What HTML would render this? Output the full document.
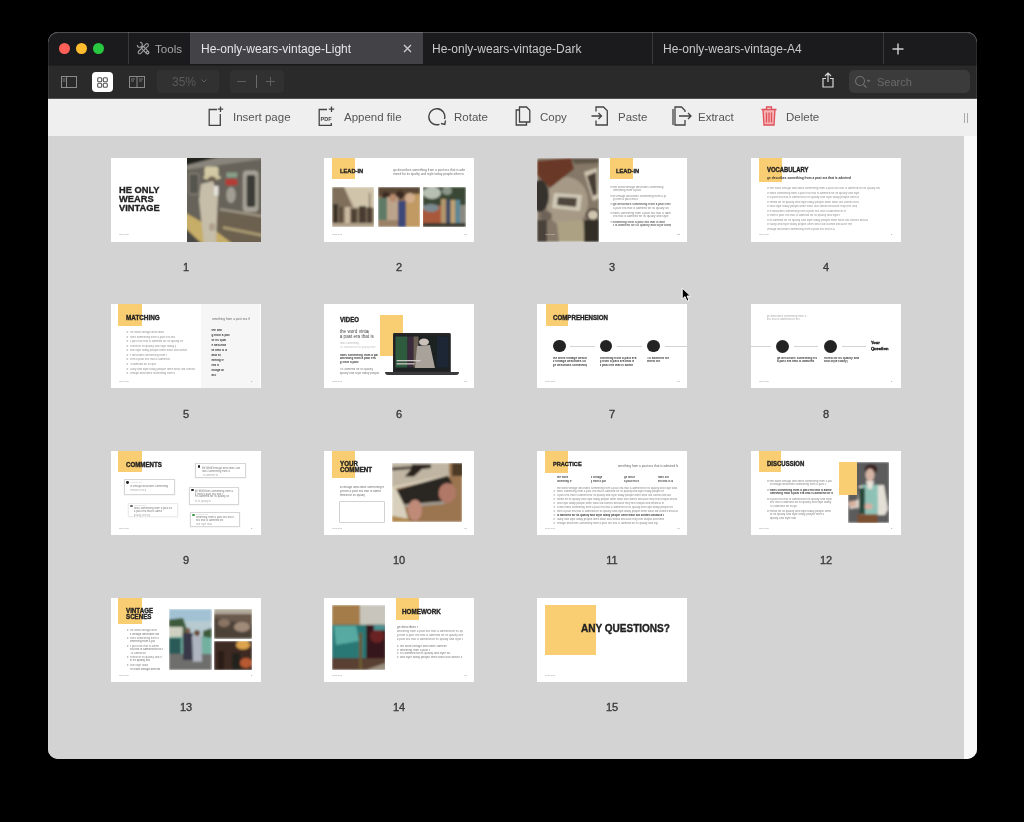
<!DOCTYPE html>
<html><head><meta charset="utf-8">
<style>
*{margin:0;padding:0;box-sizing:border-box}
html,body{width:1024px;height:822px;background:#000;overflow:hidden;font-family:"Liberation Sans",sans-serif}
#win{position:absolute;left:48px;top:32px;width:929px;height:727px;border-radius:10px;overflow:hidden;background:#d3d3d3;will-change:transform}
#tabbar{position:absolute;left:0;top:0;width:929px;height:33px;background:#1b1b1e}
#toolbar{position:absolute;left:0;top:32px;width:929px;height:35px;background:#2a2a2a;box-shadow:inset 0 1.5px 0 #19191a}
#ltool{position:absolute;left:0;top:66px;width:929px;height:38px;background:#efefef;box-shadow:inset 0 0.7px 0 #1e1e1e}
#content{position:absolute;left:0;top:104px;width:929px;height:623px;background:#d3d3d3}
#scroll{position:absolute;left:916px;top:104px;width:13px;height:623px;background:#f9f9f9}
#edge{position:absolute;left:0;top:0;width:929px;height:727px;border-radius:10px;box-shadow:inset 0 1px 0 rgba(255,255,255,.22), inset 1px 0 0 rgba(255,255,255,.08), inset -1px 0 0 rgba(255,255,255,.08)}
.ab{position:absolute}
.dot{position:absolute;width:11px;height:11px;border-radius:50%;top:11px}
.tabt{position:absolute;top:10px;font-size:12px;line-height:14px;color:#c9c9cb;white-space:nowrap}
.sep{position:absolute;top:0;width:1px;height:33px;background:#38383a}
.lt{position:absolute;top:12px;font-size:11.5px;line-height:14px;color:#555;white-space:nowrap}
.th{position:absolute;width:150px;height:84px;background:#fff;overflow:hidden;filter:blur(0.35px)}
.pn{position:absolute;will-change:transform;width:150px;text-align:center;font-size:11px;line-height:12px;color:#3a3a3a;-webkit-text-stroke:0.35px #3a3a3a}
</style></head><body>
<div id="win">
 <div id="tabbar">
  <div class="dot" style="left:10.5px;background:#fe5f57"></div>
  <div class="dot" style="left:27.5px;background:#febc2e"></div>
  <div class="dot" style="left:44.5px;background:#28c840"></div>
  <div class="sep" style="left:80px"></div>
  <svg class="ab" style="left:88px;top:9px" width="15" height="15" viewBox="0 0 15 15" fill="none" stroke="#9c9c9e" stroke-width="1.1"><rect x="-1.4" y="-4.6" width="2.8" height="9.2" rx="1.4" transform="translate(9,9) rotate(-45)"/><rect x="-1.5" y="-6.6" width="3" height="13.2" rx="1.5" transform="translate(7.3,7.7) rotate(45)"/><path d="M1.3 3.9A2.5 2.5 0 1 0 3.9 1.3"/><circle cx="11.6" cy="11.6" r="1.3"/></svg>
  <div class="tabt" style="left:107px;font-size:11.6px;color:#a6a6a8">Tools</div>
  <div class="ab" style="left:142px;top:0;width:233px;height:33px;background:#434247"></div>
  <div class="tabt" style="left:153px;color:#e6e6e8">He-only-wears-vintage-Light</div>
  <svg class="ab" style="left:355px;top:12px" width="9" height="9" viewBox="0 0 9 9" stroke="#d0d0d2" stroke-width="1.3"><path d="M1 1L8 8M8 1L1 8"/></svg>
  <div class="tabt" style="left:384px">He-only-wears-vintage-Dark</div>
  <div class="sep" style="left:604px"></div>
  <div class="tabt" style="left:615px">He-only-wears-vintage-A4</div>
  <div class="sep" style="left:835px"></div>
  <svg class="ab" style="left:844px;top:11px" width="12" height="12" viewBox="0 0 12 12" stroke="#d0d0d2" stroke-width="1.4"><path d="M6 0.5V11.5M0.5 6H11.5"/></svg>
 </div>
 <div id="toolbar">
  <svg class="ab" style="left:13px;top:12px" width="16" height="12" viewBox="0 0 16 12" fill="none" stroke="#8a8a8c" stroke-width="1"><rect x="0.5" y="0.5" width="15" height="11"/><path d="M5.5 0.5V11.5"/><path d="M1.5 3h3M1.5 5h3" stroke-width=".8"/></svg>
  <div class="ab" style="left:44px;top:8px;width:21px;height:20px;border-radius:4px;background:#fff"></div>
  <svg class="ab" style="left:49px;top:13px" width="11" height="11" viewBox="0 0 11 11" fill="none" stroke="#555" stroke-width="1.1"><rect x="0.7" y="0.7" width="4" height="4" rx="1"/><rect x="6.3" y="0.7" width="4" height="4" rx="1"/><rect x="0.7" y="6.3" width="4" height="4" rx="1"/><rect x="6.3" y="6.3" width="4" height="4" rx="1"/></svg>
  <svg class="ab" style="left:81px;top:12px" width="16" height="12" viewBox="0 0 16 12" fill="none" stroke="#8a8a8c" stroke-width="1"><rect x="0.5" y="0.5" width="15" height="11"/><path d="M8 0.5V11.5"/><path d="M2 3h4M2 5h3M10 3h4M10 5h3" stroke-width=".8"/></svg>
  <div class="ab" style="left:109px;top:6px;width:62px;height:23px;border-radius:4px;background:#313132"></div>
  <div class="ab" style="left:124px;top:11px;font-size:12px;line-height:14px;color:#5a5a5c">35%</div>
  <svg class="ab" style="left:153px;top:15px" width="6" height="4" viewBox="0 0 6 4" fill="none" stroke="#5e5e60" stroke-width="1"><path d="M0.5 0.5L3 3L5.5 0.5"/></svg>
  <div class="ab" style="left:182px;top:6px;width:54px;height:23px;border-radius:4px;background:#313132"></div>
  <div class="ab" style="left:189px;top:17px;width:9px;height:1px;background:#5e5e60"></div>
  <div class="ab" style="left:208px;top:11px;width:1px;height:13px;background:#6a6a6c"></div>
  <div class="ab" style="left:218px;top:17px;width:9px;height:1px;background:#5e5e60"></div>
  <div class="ab" style="left:222px;top:13px;width:1px;height:9px;background:#5e5e60"></div>
  <svg class="ab" style="left:774px;top:8px" width="12" height="16" viewBox="0 0 12 16" fill="none" stroke="#d8d8da" stroke-width="1.2"><path d="M6 1V10M3 4L6 1L9 4M4 6.5H1V15H11V6.5H8"/></svg>
  <div class="ab" style="left:801px;top:6px;width:121px;height:23px;border-radius:5px;background:#3b3b3c"></div>
  <svg class="ab" style="left:806px;top:11px" width="18" height="13" viewBox="0 0 18 13" fill="none" stroke="#707072" stroke-width="1.1"><circle cx="6" cy="6" r="4.5"/><path d="M9.3 9.3L12.5 12.5M13 5L14.5 6.5L16 5" /></svg>
  <div class="ab" style="left:829px;top:10.5px;font-size:11px;line-height:14px;color:#6a6a6c">Search</div>
 </div>
 <div id="ltool">
  <svg class="ab" style="left:160px;top:8px" width="16" height="21" viewBox="0 0 16 21" fill="none" stroke="#444" stroke-width="1.3"><path d="M9 3.5H1.2V19.3H12.3V8"/><path d="M12.5 0.5V6M9.8 3.2H15.2"/></svg>
  <div class="lt" style="left:185px">Insert page</div>
  <svg class="ab" style="left:270px;top:8px" width="18" height="21" viewBox="0 0 18 21" fill="none" stroke="#444" stroke-width="1.3"><path d="M9 3.5H1.2V19.3H13.3V17"/><path d="M13.5 0.5V6M10.8 3.2H16.2"/><text x="2.5" y="15" font-size="5.5" font-family="Liberation Sans" font-weight="bold" fill="#444" stroke="none">PDF</text></svg>
  <div class="lt" style="left:296px">Append file</div>
  <svg class="ab" style="left:380px;top:9px" width="19" height="19" viewBox="0 0 19 19" fill="none" stroke="#444" stroke-width="1.4"><path d="M11.5 17.3A8 8 0 1 1 16.5 12"/><path d="M17.5 13.5L16.8 17.5L13 16.5"/></svg>
  <div class="lt" style="left:406px">Rotate</div>
  <svg class="ab" style="left:467px;top:8px" width="16" height="20" viewBox="0 0 16 20" fill="none" stroke="#444" stroke-width="1.3"><path d="M4.5 1H11.5L14.8 4.3V16H4.5Z"/><path d="M4.5 4H1.2V19H11.5V16"/></svg>
  <div class="lt" style="left:492px">Copy</div>
  <svg class="ab" style="left:543px;top:8px" width="18" height="20" viewBox="0 0 18 20" fill="none" stroke="#444" stroke-width="1.3"><path d="M5 5.5V1H12.5L16.3 4.8V19H5V14.5"/><path d="M0.5 10H10.5M7.5 7L10.5 10L7.5 13"/></svg>
  <div class="lt" style="left:570px">Paste</div>
  <svg class="ab" style="left:624px;top:8px" width="20" height="20" viewBox="0 0 20 20" fill="none" stroke="#444" stroke-width="1.3"><path d="M13 6V4.5L9.5 1H3V19H13V14"/><path d="M1 3V19" /><path d="M7 10H19M16 7L19 10L16 13"/></svg>
  <div class="lt" style="left:650px">Extract</div>
  <svg class="ab" style="left:713px;top:8px" width="16" height="20" viewBox="0 0 16 20" fill="none" stroke="#e0505a" stroke-width="1.3"><path d="M2 3.5L3 19H13L14 3.5Z" fill="#f6b4b6" stroke="none"/><path d="M0.5 3.5H15.5M5.5 3.5V1H10.5V3.5M2 3.5L3 19H13L14 3.5M5.5 6.5V16.5M8 6.5V16.5M10.5 6.5V16.5"/></svg>
  <div class="lt" style="left:738px">Delete</div>
  <div class="ab" style="left:916px;top:15px;width:1px;height:10px;background:#aaa"></div>
  <div class="ab" style="left:919px;top:15px;width:1px;height:10px;background:#aaa"></div>
 </div>
 <div id="content"></div>
<div class="th" style="left:62.5px;top:125.6px"><div class="ab" style="left:8px;top:27.56px;font-size:74.4px;line-height:74.4px;color:#222;font-weight:bold;white-space:nowrap;transform:scale(0.125,0.125);transform-origin:0 0;-webkit-text-stroke:2.6px #222;">HE ONLY</div><div class="ab" style="left:8px;top:36.66px;font-size:74.4px;line-height:74.4px;color:#222;font-weight:bold;white-space:nowrap;transform:scale(0.125,0.125);transform-origin:0 0;-webkit-text-stroke:2.6px #222;">WEARS</div><div class="ab" style="left:8px;top:45.76px;font-size:74.4px;line-height:74.4px;color:#222;font-weight:bold;white-space:nowrap;transform:scale(0.125,0.125);transform-origin:0 0;-webkit-text-stroke:2.6px #222;">VINTAGE</div><div class="ab" style="left:8px;top:75.6px;width:10px;height:3.0px;overflow:hidden;font-size:2.4px;line-height:3.0px;color:#777;font-weight:normal;white-space:nowrap;opacity:0.72">ribes something</div><svg class="ab" style="left:76.5px;top:0px;overflow:hidden" width="73.5" height="84" viewBox="0 0 73.5 84"><defs><filter id="bf1" x="-10%" y="-10%" width="120%" height="120%"><feGaussianBlur stdDeviation="0.9"/></filter></defs><g filter="url(#bf1)"><rect x="-3" y="-3" width="80" height="90" fill="#67635a"/><polygon points="-3,-3 40,-3 -3,8" fill="#24231f"/><polygon points="-3,8 40,-3 76,-3 76,1 -3,12" fill="#8a857c"/><rect x="1.9" y="15.6" width="10" height="20.5" rx="2" fill="#57544d" stroke="#8a867c" stroke-width="1.2"/><rect x="30" y="54" width="46" height="32" fill="#6c6150"/><polygon points="33,50 76,57 76,59.5 33,52.5" fill="#9c9484"/><polygon points="36,68 76,76 76,79 36,71" fill="#a89a70"/><polygon points="-3,54 -3,69 15,86 46,86 22,68" fill="#c6ad68"/><polygon points="-3,69 -3,86 15,86" fill="#4b4944"/><rect x="55.8" y="12.5" width="15.6" height="41.5" rx="4" fill="#a6a196"/><rect x="59.7" y="17" width="8.6" height="32" rx="2" fill="#3b3a37"/><rect x="38.6" y="21" width="11.7" height="6.3" fill="#b63a34"/><rect x="39.4" y="14.5" width="10.9" height="5" fill="#8aa088"/><ellipse cx="44" cy="37" rx="4.7" ry="8" fill="#a39e94"/><rect x="17.5" y="8.5" width="14" height="11" rx="3" fill="#d3c9a4"/><ellipse cx="25" cy="19.5" rx="9" ry="2.6" fill="#cfc49e"/><ellipse cx="25" cy="22" rx="4" ry="3.5" fill="#6a5e50"/><polygon points="14,26 26,23 31,38 30,58 29,86 17,86 14,60 12,42" fill="#c6bea9"/><rect x="27" y="28" width="4.5" height="9.5" fill="#e4e1da"/><ellipse cx="25" cy="69" rx="3" ry="4" fill="#ad9f8c"/></g></svg></div>
<div class="th" style="left:276px;top:125.6px"><div class="ab" style="left:7.8px;top:0px;width:22.8px;height:21.7px;background:#f9cd72;"></div><div class="ab" style="left:16px;top:10.03px;font-size:45.6px;line-height:45.6px;color:#1f1f1f;font-weight:bold;white-space:nowrap;transform:scale(0.125,0.13375);transform-origin:0 0;-webkit-text-stroke:2.6px #1f1f1f;">LEAD-IN</div><div class="ab" style="left:69.2px;top:10.299999999999999px;width:71.5px;height:4.0px;overflow:hidden;font-size:3.2px;line-height:4.0px;color:#333;font-weight:normal;white-space:nowrap;opacity:0.72">ge describes something from a past era that is admired for </div><div class="ab" style="left:69.2px;top:14.2px;width:70.5px;height:4.0px;overflow:hidden;font-size:3.2px;line-height:4.0px;color:#333;font-weight:normal;white-space:nowrap;opacity:0.72">mired for its quality and style today people often wear ol</div><svg class="ab" style="left:7.9px;top:29.6px;overflow:hidden" width="42.2" height="39.8" viewBox="0 0 42.2 39.8"><defs><filter id="bf2" x="-10%" y="-10%" width="120%" height="120%"><feGaussianBlur stdDeviation="0.9"/></filter></defs><g filter="url(#bf2)"><rect width="42.2" height="39.8" fill="#a89680"/><polygon points="12,0 42.2,0 42.2,24 22,20" fill="#d0c4aa"/><polygon points="0,0 12,0 20,20 0,24" fill="#7e6e5a"/><rect y="21" width="42.2" height="19" fill="#8a7a64"/><rect x="1" y="17" width="5" height="21" fill="#3e3228"/><rect x="7" y="20" width="4" height="17" fill="#5a4a3a"/><rect x="27" y="19" width="7" height="20" fill="#463a30"/><rect x="13" y="20" width="5" height="17" fill="#c8b8a0"/><rect x="19" y="22" width="6" height="16" fill="#504234"/><rect x="35" y="20" width="5" height="18" fill="#4a3c30"/><rect x="37" y="6" width="1.2" height="16" fill="#6a5a48"/><rect x="0" y="36" width="42.2" height="4" fill="#b0a088"/></g></svg><svg class="ab" style="left:53.6px;top:29.6px;overflow:hidden" width="42.2" height="39.8" viewBox="0 0 42.2 39.8"><defs><filter id="bf3" x="-10%" y="-10%" width="120%" height="120%"><feGaussianBlur stdDeviation="0.9"/></filter></defs><g filter="url(#bf3)"><rect width="42.2" height="39.8" fill="#8a6c56"/><rect width="42.2" height="9" fill="#5a4636"/><ellipse cx="8" cy="9" rx="4" ry="4" fill="#3a2a20"/><ellipse cx="22" cy="8" rx="4" ry="4" fill="#3a2a20"/><rect x="0" y="11" width="9" height="29" fill="#5e7a66"/><rect x="9" y="10" width="11" height="30" fill="#bca48c"/><rect x="20" y="14" width="8" height="26" fill="#3e4a78"/><rect x="28" y="7" width="14.2" height="33" fill="#c09a62"/><ellipse cx="32" cy="11" rx="5" ry="5" fill="#d2ae8e"/><ellipse cx="15" cy="11" rx="3.5" ry="4" fill="#b88a6e"/><rect x="0" y="33" width="20" height="7" fill="#9a8268"/></g></svg><svg class="ab" style="left:99.3px;top:29.6px;overflow:hidden" width="42.7" height="39.8" viewBox="0 0 42.7 39.8"><defs><filter id="bf4" x="-10%" y="-10%" width="120%" height="120%"><feGaussianBlur stdDeviation="0.9"/></filter></defs><g filter="url(#bf4)"><rect width="42.7" height="39.8" fill="#5a5a4a"/><rect width="42.7" height="18" fill="#3a4636"/><ellipse cx="9" cy="6" rx="9" ry="6" fill="#b8c0b4"/><ellipse cx="24" cy="4" rx="5" ry="4" fill="#8a9688"/><polygon points="-1,22 8,18 18,19 20,40 -1,40" fill="#a8583a"/><ellipse cx="8" cy="21" rx="8" ry="4" fill="#7a8a90"/><rect x="18" y="12" width="5" height="28" fill="#b4966c"/><rect x="23" y="13" width="4.5" height="27" fill="#3c4c68"/><rect x="27.5" y="13" width="5" height="27" fill="#c0a274"/><rect x="32.5" y="13" width="4.5" height="27" fill="#5a8898"/><rect x="37" y="18" width="6" height="22" fill="#8a8a80"/><rect x="0" y="36" width="42.7" height="4" fill="#3a3a32"/></g></svg><div class="ab" style="left:8px;top:75.6px;width:10px;height:3.0px;overflow:hidden;font-size:2.4px;line-height:3.0px;color:#777;font-weight:normal;white-space:nowrap;opacity:0.72">ribes something</div><div class="ab" style="left:140.3px;top:75.6px;width:2.5px;height:3.0px;overflow:hidden;font-size:2.4px;line-height:3.0px;color:#555;font-weight:normal;white-space:nowrap;opacity:0.72">g from a</div></div>
<div class="th" style="left:489px;top:125.6px"><svg class="ab" style="left:0px;top:0px;overflow:hidden" width="61.8" height="84" viewBox="0 0 61.8 84"><defs><filter id="bf5" x="-10%" y="-10%" width="120%" height="120%"><feGaussianBlur stdDeviation="0.9"/></filter></defs><g filter="url(#bf5)"><rect width="62" height="84" fill="#857868"/><ellipse cx="30" cy="44" rx="21" ry="25" fill="#a69a86"/><polygon points="0,3 34,0 37,11 13,30 0,17" fill="#6a3826"/><polygon points="34,0 62,0 62,5 38,6" fill="#5e5446"/><ellipse cx="3" cy="38" rx="9" ry="16" fill="#36332e"/><polygon points="47,14 60,10 62,40 56,43" fill="#cdc2ae"/><polygon points="50,18 59,14 60,36 56,38" fill="#463e35"/><polygon points="17,35 45,37 43,53 15,50" fill="#d0c8b6"/><polygon points="21,39 40,40 39,49 20,47" fill="#4e463c"/><ellipse cx="9" cy="58" rx="6" ry="5" fill="#6e6458"/><rect x="0" y="62" width="10" height="22" fill="#4a433a"/><polygon points="20,64 46,62 48,84 22,84" fill="#ada184"/><rect x="47" y="62" width="15" height="22" fill="#332d27"/><ellipse cx="56" cy="57" rx="7" ry="6.5" fill="#3a332b"/><ellipse cx="56" cy="57" rx="5" ry="4.5" fill="#d0c6b0"/></g></svg><div class="ab" style="left:8px;top:75.6px;width:10px;height:3.0px;overflow:hidden;font-size:2.4px;line-height:3.0px;color:#eee;font-weight:normal;white-space:nowrap;opacity:0.72">ribes something</div><div class="ab" style="left:140.3px;top:75.6px;width:2.5px;height:3.0px;overflow:hidden;font-size:2.4px;line-height:3.0px;color:#555;font-weight:normal;white-space:nowrap;opacity:0.72">the word</div><div class="ab" style="left:72.7px;top:0px;width:23px;height:21.7px;background:#f9cd72;"></div><div class="ab" style="left:79px;top:10.03px;font-size:45.6px;line-height:45.6px;color:#1f1f1f;font-weight:bold;white-space:nowrap;transform:scale(0.125,0.13375);transform-origin:0 0;-webkit-text-stroke:2.6px #1f1f1f;">LEAD-IN</div><div class="ab" style="left:73.3px;top:28.3px;width:2.5px;height:3.75px;overflow:hidden;font-size:3.0px;line-height:3.75px;color:#777;font-weight:normal;white-space:nowrap;opacity:0.72">mired f</div><div class="ab" style="left:76.1px;top:28.3px;width:50.900000000000006px;height:3.75px;overflow:hidden;font-size:3.0px;line-height:3.75px;color:#555;font-weight:normal;white-space:nowrap;opacity:0.72">the word vintage describes something from a pa</div><div class="ab" style="left:76.1px;top:31.599999999999998px;width:27.900000000000006px;height:3.75px;overflow:hidden;font-size:3.0px;line-height:3.75px;color:#555;font-weight:normal;white-space:nowrap;opacity:0.72">omething from a past era tha</div><div class="ab" style="left:73.3px;top:37.050000000000004px;width:2.5px;height:3.75px;overflow:hidden;font-size:3.0px;line-height:3.75px;color:#777;font-weight:normal;white-space:nowrap;opacity:0.72">mired f</div><div class="ab" style="left:76.1px;top:37.050000000000004px;width:52.900000000000006px;height:3.75px;overflow:hidden;font-size:3.0px;line-height:3.75px;color:#555;font-weight:normal;white-space:nowrap;opacity:0.72">d vintage describes something from a past era t</div><div class="ab" style="left:76.1px;top:40.35px;width:24.900000000000006px;height:3.75px;overflow:hidden;font-size:3.0px;line-height:3.75px;color:#555;font-weight:normal;white-space:nowrap;opacity:0.72">g from a past era that is</div><div class="ab" style="left:73.3px;top:45.800000000000004px;width:2.5px;height:3.75px;overflow:hidden;font-size:3.0px;line-height:3.75px;color:#777;font-weight:normal;white-space:nowrap;opacity:0.72">mired f</div><div class="ab" style="left:76.1px;top:45.800000000000004px;width:57.900000000000006px;height:3.75px;overflow:hidden;font-size:3.0px;line-height:3.75px;color:#555;font-weight:bold;white-space:nowrap;opacity:0.9">ge describes something from a past era that is admi</div><div class="ab" style="left:76.1px;top:49.1px;width:55.900000000000006px;height:3.75px;overflow:hidden;font-size:3.0px;line-height:3.75px;color:#555;font-weight:normal;white-space:nowrap;opacity:0.72">a past era that is admired for its quality and sty</div><div class="ab" style="left:73.3px;top:54.550000000000004px;width:2.5px;height:3.75px;overflow:hidden;font-size:3.0px;line-height:3.75px;color:#777;font-weight:normal;white-space:nowrap;opacity:0.72">mired f</div><div class="ab" style="left:76.1px;top:54.550000000000004px;width:57.900000000000006px;height:3.75px;overflow:hidden;font-size:3.0px;line-height:3.75px;color:#555;font-weight:normal;white-space:nowrap;opacity:0.72">ribes something from a past era that is admired for</div><div class="ab" style="left:76.1px;top:57.85px;width:55.900000000000006px;height:3.75px;overflow:hidden;font-size:3.0px;line-height:3.75px;color:#555;font-weight:normal;white-space:nowrap;opacity:0.72">era that is admired for its quality and style toda</div><div class="ab" style="left:73.3px;top:63.3px;width:2.5px;height:3.75px;overflow:hidden;font-size:3.0px;line-height:3.75px;color:#777;font-weight:normal;white-space:nowrap;opacity:0.72">mired f</div><div class="ab" style="left:76.1px;top:63.3px;width:51.900000000000006px;height:3.75px;overflow:hidden;font-size:3.0px;line-height:3.75px;color:#555;font-weight:bold;white-space:nowrap;opacity:0.9">omething from a past era that is admired for it</div><div class="ab" style="left:76.1px;top:66.6px;width:57.900000000000006px;height:3.75px;overflow:hidden;font-size:3.0px;line-height:3.75px;color:#555;font-weight:bold;white-space:nowrap;opacity:0.9">t is admired for its quality and style today people</div></div>
<div class="th" style="left:702.5px;top:125.6px"><div class="ab" style="left:8.1px;top:0px;width:23px;height:24.1px;background:#f9cd72;"></div><div class="ab" style="left:16.6px;top:9.87px;font-size:47.2px;line-height:47.2px;color:#1f1f1f;font-weight:bold;white-space:nowrap;transform:scale(0.125,0.13375);transform-origin:0 0;-webkit-text-stroke:2.6px #1f1f1f;">VOCABULARY</div><div class="ab" style="left:16.6px;top:18.3px;width:84px;height:4.0px;overflow:hidden;font-size:3.2px;line-height:4.0px;color:#222;font-weight:bold;white-space:nowrap;opacity:0.9">ge describes something from a past era that is admired for its quali</div><div class="ab" style="left:16.6px;top:29.5px;width:2.5px;height:3.625px;overflow:hidden;font-size:2.9px;line-height:3.625px;color:#777;font-weight:normal;white-space:nowrap;opacity:0.72">d vintag</div><div class="ab" style="left:19.4px;top:29.5px;width:110.1px;height:3.625px;overflow:hidden;font-size:2.9px;line-height:3.625px;color:#666;font-weight:normal;white-space:nowrap;opacity:0.72">the word vintage describes something from a past era that is admired for its quality and style t</div><div class="ab" style="left:16.6px;top:34.02px;width:2.5px;height:3.625px;overflow:hidden;font-size:2.9px;line-height:3.625px;color:#777;font-weight:normal;white-space:nowrap;opacity:0.72">d vintag</div><div class="ab" style="left:19.4px;top:34.02px;width:89.0px;height:3.625px;overflow:hidden;font-size:2.9px;line-height:3.625px;color:#666;font-weight:normal;white-space:nowrap;opacity:0.72">ribes something from a past era that is admired for its quality and style today</div><div class="ab" style="left:16.6px;top:38.540000000000006px;width:2.5px;height:3.625px;overflow:hidden;font-size:2.9px;line-height:3.625px;color:#777;font-weight:normal;white-space:nowrap;opacity:0.72">d vintag</div><div class="ab" style="left:19.4px;top:38.540000000000006px;width:89.0px;height:3.625px;overflow:hidden;font-size:2.9px;line-height:3.625px;color:#666;font-weight:normal;white-space:nowrap;opacity:0.72">a past era that is admired for its quality and style today people often wear ol</div><div class="ab" style="left:16.6px;top:43.06px;width:2.5px;height:3.625px;overflow:hidden;font-size:2.9px;line-height:3.625px;color:#777;font-weight:normal;white-space:nowrap;opacity:0.72">d vintag</div><div class="ab" style="left:19.4px;top:43.06px;width:89.0px;height:3.625px;overflow:hidden;font-size:2.9px;line-height:3.625px;color:#666;font-weight:normal;white-space:nowrap;opacity:0.72">mired for its quality and style today people often wear old clothes because the</div><div class="ab" style="left:16.6px;top:47.58px;width:2.5px;height:3.625px;overflow:hidden;font-size:2.9px;line-height:3.625px;color:#777;font-weight:normal;white-space:nowrap;opacity:0.72">d vintag</div><div class="ab" style="left:19.4px;top:47.58px;width:87.5px;height:3.625px;overflow:hidden;font-size:2.9px;line-height:3.625px;color:#666;font-weight:normal;white-space:nowrap;opacity:0.72"> and style today people often wear old clothes because they feel unique and t</div><div class="ab" style="left:16.6px;top:52.1px;width:2.5px;height:3.625px;overflow:hidden;font-size:2.9px;line-height:3.625px;color:#777;font-weight:normal;white-space:nowrap;opacity:0.72">d vintag</div><div class="ab" style="left:19.4px;top:52.1px;width:76.19999999999999px;height:3.625px;overflow:hidden;font-size:2.9px;line-height:3.625px;color:#666;font-weight:normal;white-space:nowrap;opacity:0.72">e describes something from a past era that is admired for its qualit</div><div class="ab" style="left:16.6px;top:56.620000000000005px;width:2.5px;height:3.625px;overflow:hidden;font-size:2.9px;line-height:3.625px;color:#777;font-weight:normal;white-space:nowrap;opacity:0.72">d vintag</div><div class="ab" style="left:19.4px;top:56.620000000000005px;width:70.30000000000001px;height:3.625px;overflow:hidden;font-size:2.9px;line-height:3.625px;color:#666;font-weight:normal;white-space:nowrap;opacity:0.72"> from a past era that is admired for its quality and style toda</div><div class="ab" style="left:16.6px;top:61.14px;width:2.5px;height:3.625px;overflow:hidden;font-size:2.9px;line-height:3.625px;color:#777;font-weight:normal;white-space:nowrap;opacity:0.72">d vintag</div><div class="ab" style="left:19.4px;top:61.14px;width:98.4px;height:3.625px;overflow:hidden;font-size:2.9px;line-height:3.625px;color:#666;font-weight:normal;white-space:nowrap;opacity:0.72"> is admired for its quality and style today people often wear old clothes because they</div><div class="ab" style="left:16.6px;top:65.66px;width:2.5px;height:3.625px;overflow:hidden;font-size:2.9px;line-height:3.625px;color:#777;font-weight:normal;white-space:nowrap;opacity:0.72">d vintag</div><div class="ab" style="left:19.4px;top:65.66px;width:82.0px;height:3.625px;overflow:hidden;font-size:2.9px;line-height:3.625px;color:#666;font-weight:normal;white-space:nowrap;opacity:0.72">uality and style today people often wear old clothes because they feel un</div><div class="ab" style="left:16.6px;top:70.17999999999999px;width:68.4px;height:3.625px;overflow:hidden;font-size:2.9px;line-height:3.625px;color:#666;font-weight:normal;white-space:nowrap;opacity:0.72">vintage describes something from a past era that is admired fo</div><div class="ab" style="left:8px;top:75.6px;width:10px;height:3.0px;overflow:hidden;font-size:2.4px;line-height:3.0px;color:#777;font-weight:normal;white-space:nowrap;opacity:0.72">ribes something</div><div class="ab" style="left:140.3px;top:75.6px;width:2.5px;height:3.0px;overflow:hidden;font-size:2.4px;line-height:3.0px;color:#555;font-weight:normal;white-space:nowrap;opacity:0.72">g from a</div></div>
<div class="th" style="left:62.5px;top:272.4px"><div class="ab" style="left:90.9px;top:0px;width:59.1px;height:84px;background:#f6f6f6;"></div><div class="ab" style="left:7.7px;top:0px;width:23.4px;height:21.2px;background:#f9cd72;"></div><div class="ab" style="left:15.9px;top:9.47px;font-size:50.8px;line-height:50.8px;color:#1f1f1f;font-weight:bold;white-space:nowrap;transform:scale(0.125,0.13375);transform-origin:0 0;-webkit-text-stroke:2.6px #1f1f1f;">MATCHING</div><div class="ab" style="left:15.9px;top:26.9px;width:2.5px;height:3.625px;overflow:hidden;font-size:2.9px;line-height:3.625px;color:#777;font-weight:normal;white-space:nowrap;opacity:0.72">d vintag</div><div class="ab" style="left:19.1px;top:26.9px;width:34.3px;height:3.625px;overflow:hidden;font-size:2.9px;line-height:3.625px;color:#666;font-weight:normal;white-space:nowrap;opacity:0.72">the word vintage describes somethi</div><div class="ab" style="left:15.9px;top:31.429999999999996px;width:2.5px;height:3.625px;overflow:hidden;font-size:2.9px;line-height:3.625px;color:#777;font-weight:normal;white-space:nowrap;opacity:0.72">d vintag</div><div class="ab" style="left:19.1px;top:31.429999999999996px;width:45.9px;height:3.625px;overflow:hidden;font-size:2.9px;line-height:3.625px;color:#666;font-weight:normal;white-space:nowrap;opacity:0.72">ribes something from a past era that is adm</div><div class="ab" style="left:15.9px;top:35.96px;width:2.5px;height:3.625px;overflow:hidden;font-size:2.9px;line-height:3.625px;color:#777;font-weight:normal;white-space:nowrap;opacity:0.72">d vintag</div><div class="ab" style="left:19.1px;top:35.96px;width:53.1px;height:3.625px;overflow:hidden;font-size:2.9px;line-height:3.625px;color:#666;font-weight:normal;white-space:nowrap;opacity:0.72">a past era that is admired for its quality and st</div><div class="ab" style="left:15.9px;top:40.49px;width:2.5px;height:3.625px;overflow:hidden;font-size:2.9px;line-height:3.625px;color:#777;font-weight:normal;white-space:nowrap;opacity:0.72">d vintag</div><div class="ab" style="left:19.1px;top:40.49px;width:46.4px;height:3.625px;overflow:hidden;font-size:2.9px;line-height:3.625px;color:#666;font-weight:normal;white-space:nowrap;opacity:0.72">mired for its quality and style today people</div><div class="ab" style="left:15.9px;top:45.02px;width:2.5px;height:3.625px;overflow:hidden;font-size:2.9px;line-height:3.625px;color:#777;font-weight:normal;white-space:nowrap;opacity:0.72">d vintag</div><div class="ab" style="left:19.1px;top:45.02px;width:57.800000000000004px;height:3.625px;overflow:hidden;font-size:2.9px;line-height:3.625px;color:#666;font-weight:normal;white-space:nowrap;opacity:0.72"> and style today people often wear old clothes becaus</div><div class="ab" style="left:15.9px;top:49.550000000000004px;width:2.5px;height:3.625px;overflow:hidden;font-size:2.9px;line-height:3.625px;color:#777;font-weight:normal;white-space:nowrap;opacity:0.72">d vintag</div><div class="ab" style="left:19.1px;top:49.550000000000004px;width:37.8px;height:3.625px;overflow:hidden;font-size:2.9px;line-height:3.625px;color:#666;font-weight:normal;white-space:nowrap;opacity:0.72">e describes something from a past era</div><div class="ab" style="left:15.9px;top:54.08px;width:2.5px;height:3.625px;overflow:hidden;font-size:2.9px;line-height:3.625px;color:#777;font-weight:normal;white-space:nowrap;opacity:0.72">d vintag</div><div class="ab" style="left:19.1px;top:54.08px;width:40.6px;height:3.625px;overflow:hidden;font-size:2.9px;line-height:3.625px;color:#666;font-weight:normal;white-space:nowrap;opacity:0.72"> from a past era that is admired for it</div><div class="ab" style="left:15.9px;top:58.61px;width:2.5px;height:3.625px;overflow:hidden;font-size:2.9px;line-height:3.625px;color:#777;font-weight:normal;white-space:nowrap;opacity:0.72">d vintag</div><div class="ab" style="left:19.1px;top:58.61px;width:26.1px;height:3.625px;overflow:hidden;font-size:2.9px;line-height:3.625px;color:#666;font-weight:normal;white-space:nowrap;opacity:0.72"> is admired for its quality</div><div class="ab" style="left:15.9px;top:63.14px;width:2.5px;height:3.625px;overflow:hidden;font-size:2.9px;line-height:3.625px;color:#777;font-weight:normal;white-space:nowrap;opacity:0.72">d vintag</div><div class="ab" style="left:19.1px;top:63.14px;width:65.1px;height:3.625px;overflow:hidden;font-size:2.9px;line-height:3.625px;color:#666;font-weight:normal;white-space:nowrap;opacity:0.72">uality and style today people often wear old clothes becaus</div><div class="ab" style="left:15.9px;top:67.67px;width:2.5px;height:3.625px;overflow:hidden;font-size:2.9px;line-height:3.625px;color:#777;font-weight:normal;white-space:nowrap;opacity:0.72">d vintag</div><div class="ab" style="left:19.1px;top:67.67px;width:45.6px;height:3.625px;overflow:hidden;font-size:2.9px;line-height:3.625px;color:#666;font-weight:normal;white-space:nowrap;opacity:0.72">vintage describes something from a past era</div><div class="ab" style="left:101.4px;top:12.549999999999999px;width:38.5px;height:4.0px;overflow:hidden;font-size:3.2px;line-height:4.0px;color:#333;font-weight:normal;white-space:nowrap;opacity:0.72">omething from a past era that is a</div><div class="ab" style="left:100.9px;top:24.7px;width:10.699999999999989px;height:3.875px;overflow:hidden;font-size:3.1px;line-height:3.875px;color:#222;font-weight:bold;white-space:nowrap;opacity:0.9">the word vinta</div><div class="ab" style="left:100.9px;top:29.7px;width:18.799999999999997px;height:3.875px;overflow:hidden;font-size:3.1px;line-height:3.875px;color:#222;font-weight:bold;white-space:nowrap;opacity:0.9">g from a past era th</div><div class="ab" style="left:100.9px;top:34.7px;width:14.599999999999994px;height:3.875px;overflow:hidden;font-size:3.1px;line-height:3.875px;color:#222;font-weight:bold;white-space:nowrap;opacity:0.9">or its quality an</div><div class="ab" style="left:100.9px;top:39.7px;width:15.0px;height:3.875px;overflow:hidden;font-size:3.1px;line-height:3.875px;color:#222;font-weight:bold;white-space:nowrap;opacity:0.9">e describes somet</div><div class="ab" style="left:100.9px;top:44.7px;width:16.099999999999994px;height:3.875px;overflow:hidden;font-size:3.1px;line-height:3.875px;color:#222;font-weight:bold;white-space:nowrap;opacity:0.9">ra that is admired</div><div class="ab" style="left:100.9px;top:49.7px;width:9.399999999999991px;height:3.875px;overflow:hidden;font-size:3.1px;line-height:3.875px;color:#222;font-weight:bold;white-space:nowrap;opacity:0.9">and style tod</div><div class="ab" style="left:100.9px;top:54.7px;width:12.5px;height:3.875px;overflow:hidden;font-size:3.1px;line-height:3.875px;color:#222;font-weight:bold;white-space:nowrap;opacity:0.9">ething from a p</div><div class="ab" style="left:100.9px;top:59.7px;width:7.849999999999994px;height:3.875px;overflow:hidden;font-size:3.1px;line-height:3.875px;color:#222;font-weight:bold;white-space:nowrap;opacity:0.9">red for its </div><div class="ab" style="left:100.9px;top:64.7px;width:12.199999999999989px;height:3.875px;overflow:hidden;font-size:3.1px;line-height:3.875px;color:#222;font-weight:bold;white-space:nowrap;opacity:0.9">intage describe</div><div class="ab" style="left:100.9px;top:69.7px;width:5.5px;height:3.875px;overflow:hidden;font-size:3.1px;line-height:3.875px;color:#222;font-weight:bold;white-space:nowrap;opacity:0.9">ast era th</div><div class="ab" style="left:8px;top:75.6px;width:10px;height:3.0px;overflow:hidden;font-size:2.4px;line-height:3.0px;color:#777;font-weight:normal;white-space:nowrap;opacity:0.72">ribes something</div><div class="ab" style="left:140.3px;top:75.6px;width:2.5px;height:3.0px;overflow:hidden;font-size:2.4px;line-height:3.0px;color:#555;font-weight:normal;white-space:nowrap;opacity:0.72">g from a</div></div>
<div class="th" style="left:276px;top:272.4px"><div class="ab" style="left:15.75px;top:12.81px;font-size:48.8px;line-height:48.8px;color:#222;font-weight:bold;white-space:nowrap;transform:scale(0.125,0.13375);transform-origin:0 0;-webkit-text-stroke:2.6px #222;">VIDEO</div><div class="ab" style="left:15.75px;top:24.55px;width:29px;height:5.75px;overflow:hidden;font-size:4.6px;line-height:5.75px;color:#333;font-weight:500;white-space:nowrap;opacity:0.9">the word vintage desc</div><div class="ab" style="left:15.75px;top:30.0px;width:35px;height:5.75px;overflow:hidden;font-size:4.6px;line-height:5.75px;color:#333;font-weight:500;white-space:nowrap;opacity:0.9">a past era that is admir</div><div class="ab" style="left:15.75px;top:37.900000000000006px;width:19.5px;height:3.375px;overflow:hidden;font-size:2.7px;line-height:3.375px;color:#999;font-weight:normal;white-space:nowrap;opacity:0.72">ribes something from a </div><div class="ab" style="left:15.75px;top:41.800000000000004px;width:36.7px;height:3.375px;overflow:hidden;font-size:2.7px;line-height:3.375px;color:#aaa;font-weight:normal;white-space:nowrap;opacity:0.72">t is admired for its quality and style</div><div class="ab" style="left:15.75px;top:49.3px;width:38px;height:3.75px;overflow:hidden;font-size:3.0px;line-height:3.75px;color:#222;font-weight:bold;white-space:nowrap;opacity:0.9">ribes something from a past era that</div><div class="ab" style="left:15.75px;top:52.95px;width:36.5px;height:3.75px;overflow:hidden;font-size:3.0px;line-height:3.75px;color:#222;font-weight:bold;white-space:nowrap;opacity:0.9">omething from a past era that is a</div><div class="ab" style="left:15.75px;top:56.6px;width:19.5px;height:3.75px;overflow:hidden;font-size:3.0px;line-height:3.75px;color:#222;font-weight:bold;white-space:nowrap;opacity:0.9">g from a past era tha</div><div class="ab" style="left:15.75px;top:63.8px;width:33px;height:3.75px;overflow:hidden;font-size:3.0px;line-height:3.75px;color:#444;font-weight:normal;white-space:nowrap;opacity:0.72">t is admired for its quality and</div><div class="ab" style="left:15.75px;top:67.55px;width:40.6px;height:3.75px;overflow:hidden;font-size:3.0px;line-height:3.75px;color:#444;font-weight:normal;white-space:nowrap;opacity:0.72">quality and style today people often w</div><div class="ab" style="left:56.1px;top:11.0px;width:23.4px;height:41.1px;background:#f9cd72;"></div><svg class="ab" style="left:69.2px;top:28.2px;overflow:hidden" width="57.8" height="39.8" viewBox="0 0 57.8 39.8"><defs><filter id="bf6" x="-10%" y="-10%" width="120%" height="120%"><feGaussianBlur stdDeviation="0.63"/></filter></defs><g filter="url(#bf6)"><rect width="57.8" height="39.8" rx="1.5" fill="#262628"/><rect x="1.6" y="2.6" width="54.6" height="35" fill="#1e2224"/><rect x="2.5" y="3.5" width="12" height="31" fill="#2e5a3e"/><rect x="14.5" y="3.5" width="6" height="31" fill="#3a2a3a"/><rect x="20.5" y="3.5" width="5" height="31" fill="#6a5e52"/><ellipse cx="31" cy="9" rx="5" ry="3.5" fill="#cac2ba"/><polygon points="24,13 37,12 42,35 22,35" fill="#a8a29a"/><rect x="44" y="3.5" width="11" height="31" fill="#1e2634"/><rect x="3.6" y="27" width="24" height="1.3" fill="#cfc8c8"/><rect x="3.6" y="30.2" width="18" height="1.3" fill="#cfc8c8"/></g></svg><div class="ab" style="left:61.1px;top:68px;width:74.2px;height:2.4px;background:#3a3a3c;border-radius:0 0 3px 3px"></div><div class="ab" style="left:8px;top:75.6px;width:10px;height:3.0px;overflow:hidden;font-size:2.4px;line-height:3.0px;color:#777;font-weight:normal;white-space:nowrap;opacity:0.72">ribes something</div><div class="ab" style="left:140.3px;top:75.6px;width:2.5px;height:3.0px;overflow:hidden;font-size:2.4px;line-height:3.0px;color:#555;font-weight:normal;white-space:nowrap;opacity:0.72">g from a</div></div>
<div class="th" style="left:489px;top:272.4px"><div class="ab" style="left:8.5px;top:0px;width:22.4px;height:21.4px;background:#f9cd72;"></div><div class="ab" style="left:16px;top:9.88px;font-size:49.2px;line-height:49.2px;color:#1f1f1f;font-weight:bold;white-space:nowrap;transform:scale(0.125,0.13375);transform-origin:0 0;-webkit-text-stroke:2.6px #1f1f1f;">COMPREHENSION</div><div class="ab" style="left:16.05px;top:35.35px;width:12.5px;height:12.5px;background:#232323;border-radius:50%"></div><div class="ab" style="left:62.95px;top:35.35px;width:12.5px;height:12.5px;background:#232323;border-radius:50%"></div><div class="ab" style="left:110.05px;top:35.35px;width:12.5px;height:12.5px;background:#232323;border-radius:50%"></div><div class="ab" style="left:33px;top:41.2px;width:25px;height:0.9px;background:#d2d2d2;"></div><div class="ab" style="left:80px;top:41.2px;width:25px;height:0.9px;background:#d2d2d2;"></div><div class="ab" style="left:128px;top:41.2px;width:22px;height:0.9px;background:#d2d2d2;"></div><div class="ab" style="left:15.6px;top:52.300000000000004px;width:34.4px;height:3.875px;overflow:hidden;font-size:3.1px;line-height:3.875px;color:#222;font-weight:bold;white-space:nowrap;opacity:0.9">the word vintage describes somet</div><div class="ab" style="left:15.6px;top:56.00000000000001px;width:33.4px;height:3.875px;overflow:hidden;font-size:3.1px;line-height:3.875px;color:#222;font-weight:bold;white-space:nowrap;opacity:0.9">d vintage describes something f</div><div class="ab" style="left:15.6px;top:59.7px;width:34.4px;height:3.875px;overflow:hidden;font-size:3.1px;line-height:3.875px;color:#222;font-weight:bold;white-space:nowrap;opacity:0.9">ge describes something from a pa</div><div class="ab" style="left:62.5px;top:52.300000000000004px;width:37.5px;height:3.875px;overflow:hidden;font-size:3.1px;line-height:3.875px;color:#222;font-weight:bold;white-space:nowrap;opacity:0.9">omething from a past era that is a</div><div class="ab" style="left:62.5px;top:56.00000000000001px;width:34.5px;height:3.875px;overflow:hidden;font-size:3.1px;line-height:3.875px;color:#222;font-weight:bold;white-space:nowrap;opacity:0.9">g from a past era that is admire</div><div class="ab" style="left:62.5px;top:59.7px;width:33.5px;height:3.875px;overflow:hidden;font-size:3.1px;line-height:3.875px;color:#222;font-weight:bold;white-space:nowrap;opacity:0.9">a past era that is admired for </div><div class="ab" style="left:109.5px;top:52.300000000000004px;width:23.5px;height:3.875px;overflow:hidden;font-size:3.1px;line-height:3.875px;color:#222;font-weight:bold;white-space:nowrap;opacity:0.9">t is admired for its qua</div><div class="ab" style="left:109.5px;top:56.00000000000001px;width:14.5px;height:3.875px;overflow:hidden;font-size:3.1px;line-height:3.875px;color:#222;font-weight:bold;white-space:nowrap;opacity:0.9">mired for its qua</div><div class="ab" style="left:8px;top:75.6px;width:10px;height:3.0px;overflow:hidden;font-size:2.4px;line-height:3.0px;color:#777;font-weight:normal;white-space:nowrap;opacity:0.72">ribes something</div><div class="ab" style="left:140.3px;top:75.6px;width:2.5px;height:3.0px;overflow:hidden;font-size:2.4px;line-height:3.0px;color:#555;font-weight:normal;white-space:nowrap;opacity:0.72">g from a</div></div>
<div class="th" style="left:702.5px;top:272.4px"><div class="ab" style="left:16.25px;top:10.2px;width:40.6px;height:3.625px;overflow:hidden;font-size:2.9px;line-height:3.625px;color:#888;font-weight:normal;white-space:nowrap;opacity:0.72">ge describes something from a past era </div><div class="ab" style="left:16.25px;top:13.799999999999999px;width:33.5px;height:3.625px;overflow:hidden;font-size:2.9px;line-height:3.625px;color:#888;font-weight:normal;white-space:nowrap;opacity:0.72">era that is admired for its quali</div><div class="ab" style="left:0px;top:41.2px;width:20.6px;height:0.9px;background:#d2d2d2;"></div><div class="ab" style="left:25.700000000000003px;top:35.8px;width:13px;height:13px;background:#232323;border-radius:50%"></div><div class="ab" style="left:73.0px;top:35.8px;width:13px;height:13px;background:#232323;border-radius:50%"></div><div class="ab" style="left:43.6px;top:41.2px;width:24.2px;height:0.9px;background:#d2d2d2;"></div><div class="ab" style="left:91.25px;top:41.2px;width:24.25px;height:0.9px;background:#d2d2d2;"></div><div class="ab" style="left:120.9px;top:35.77px;font-size:32.0px;line-height:32.0px;color:#222;font-weight:bold;white-space:nowrap;transform:scale(0.125,0.13375);transform-origin:0 0;-webkit-text-stroke:2.6px #222;">Your</div><div class="ab" style="left:120.9px;top:42.07px;font-size:32.0px;line-height:32.0px;color:#222;font-weight:bold;white-space:nowrap;transform:scale(0.125,0.13375);transform-origin:0 0;-webkit-text-stroke:2.6px #222;">Question</div><div class="ab" style="left:26.4px;top:52.400000000000006px;width:39.8px;height:3.875px;overflow:hidden;font-size:3.1px;line-height:3.875px;color:#222;font-weight:bold;white-space:nowrap;opacity:0.9">ge describes something from a past e</div><div class="ab" style="left:26.4px;top:56.0px;width:36.7px;height:3.875px;overflow:hidden;font-size:3.1px;line-height:3.875px;color:#222;font-weight:bold;white-space:nowrap;opacity:0.9">a past era that is admired for its</div><div class="ab" style="left:73.6px;top:52.400000000000006px;width:34.8px;height:3.875px;overflow:hidden;font-size:3.1px;line-height:3.875px;color:#222;font-weight:bold;white-space:nowrap;opacity:0.9">mired for its quality and style </div><div class="ab" style="left:73.6px;top:56.0px;width:23.9px;height:3.875px;overflow:hidden;font-size:3.1px;line-height:3.875px;color:#222;font-weight:bold;white-space:nowrap;opacity:0.9"> and style today people </div><div class="ab" style="left:8px;top:75.6px;width:10px;height:3.0px;overflow:hidden;font-size:2.4px;line-height:3.0px;color:#777;font-weight:normal;white-space:nowrap;opacity:0.72">ribes something</div><div class="ab" style="left:140.3px;top:75.6px;width:2.5px;height:3.0px;overflow:hidden;font-size:2.4px;line-height:3.0px;color:#555;font-weight:normal;white-space:nowrap;opacity:0.72">g from a</div></div>
<div class="th" style="left:62.5px;top:419.2px"><div class="ab" style="left:7.7px;top:0px;width:23.4px;height:20.6px;background:#f9cd72;"></div><div class="ab" style="left:15.5px;top:9.78px;font-size:49.2px;line-height:49.2px;color:#1f1f1f;font-weight:bold;white-space:nowrap;transform:scale(0.125,0.13375);transform-origin:0 0;-webkit-text-stroke:2.6px #1f1f1f;">COMMENTS</div><div class="ab" style="left:84.7px;top:12.0px;width:51.1px;height:14.8px;background:#fff;border:0.8px solid #d6d6d6;box-shadow:0 0.7px 1.4px rgba(0,0,0,.13)"></div><div class="ab" style="left:87.0px;top:14.0px;width:2.8px;height:2.8px;background:#222;border-radius:50%"></div><div class="ab" style="left:91.0px;top:13.5px;width:12px;height:2.5px;overflow:hidden;font-size:2.0px;line-height:2.5px;color:#aaa;font-weight:normal;white-space:nowrap;opacity:0.72">the word vintage des</div><div class="ab" style="left:91.0px;top:16.3px;width:38px;height:3.5px;overflow:hidden;font-size:2.8px;line-height:3.5px;color:#444;font-weight:normal;white-space:nowrap;opacity:0.72">the word vintage describes something f</div><div class="ab" style="left:91.0px;top:18.7px;width:28px;height:3.5px;overflow:hidden;font-size:2.8px;line-height:3.5px;color:#444;font-weight:normal;white-space:nowrap;opacity:0.72">ribes something from a past e</div><div class="ab" style="left:91.0px;top:22.9px;width:16px;height:3.25px;overflow:hidden;font-size:2.6px;line-height:3.25px;color:#888;font-weight:normal;white-space:nowrap;opacity:0.72">t is admired for its</div><div class="ab" style="left:13.6px;top:28.1px;width:50.8px;height:15.5px;background:#fff;border:0.8px solid #d6d6d6;box-shadow:0 0.7px 1.4px rgba(0,0,0,.13)"></div><div class="ab" style="left:15.899999999999999px;top:30.1px;width:2.8px;height:2.8px;background:#222;border-radius:50%"></div><div class="ab" style="left:19.9px;top:29.6px;width:12px;height:2.5px;overflow:hidden;font-size:2.0px;line-height:2.5px;color:#aaa;font-weight:normal;white-space:nowrap;opacity:0.72">d vintage describes </div><div class="ab" style="left:19.9px;top:33.800000000000004px;width:38px;height:3.5px;overflow:hidden;font-size:2.8px;line-height:3.5px;color:#444;font-weight:normal;white-space:nowrap;opacity:0.72">d vintage describes something from a p</div><div class="ab" style="left:19.9px;top:38.1px;width:16px;height:3.25px;overflow:hidden;font-size:2.6px;line-height:3.25px;color:#888;font-weight:normal;white-space:nowrap;opacity:0.72">mired for its qualit</div><div class="ab" style="left:78.0px;top:35.4px;width:50.4px;height:18.0px;background:#fff;border:0.8px solid #d6d6d6;box-shadow:0 0.7px 1.4px rgba(0,0,0,.13)"></div><div class="ab" style="left:80.3px;top:37.4px;width:2.8px;height:2.8px;background:#222;border-radius:50%"></div><div class="ab" style="left:84.3px;top:36.9px;width:12px;height:2.5px;overflow:hidden;font-size:2.0px;line-height:2.5px;color:#aaa;font-weight:normal;white-space:nowrap;opacity:0.72">ge describes somethi</div><div class="ab" style="left:84.3px;top:39.300000000000004px;width:38px;height:3.5px;overflow:hidden;font-size:2.8px;line-height:3.5px;color:#444;font-weight:normal;white-space:nowrap;opacity:0.72">ge describes something from a past era</div><div class="ab" style="left:84.3px;top:41.800000000000004px;width:28px;height:3.5px;overflow:hidden;font-size:2.8px;line-height:3.5px;color:#444;font-weight:normal;white-space:nowrap;opacity:0.72">g from a past era that is adm</div><div class="ab" style="left:84.3px;top:44.300000000000004px;width:34px;height:3.5px;overflow:hidden;font-size:2.8px;line-height:3.5px;color:#444;font-weight:normal;white-space:nowrap;opacity:0.72">t is admired for its quality and s</div><div class="ab" style="left:84.3px;top:48.7px;width:16px;height:3.25px;overflow:hidden;font-size:2.6px;line-height:3.25px;color:#888;font-weight:normal;white-space:nowrap;opacity:0.72">or its quality and s</div><div class="ab" style="left:17.0px;top:51.4px;width:50.0px;height:14.5px;background:#fff;border:0.8px solid #ececec;box-shadow:0 0.7px 1.4px rgba(0,0,0,.13)"></div><div class="ab" style="left:19.3px;top:53.4px;width:2.8px;height:2.8px;background:#666;border-radius:50%"></div><div class="ab" style="left:23.3px;top:52.9px;width:12px;height:2.5px;overflow:hidden;font-size:2.0px;line-height:2.5px;color:#aaa;font-weight:normal;white-space:nowrap;opacity:0.72">ribes something from</div><div class="ab" style="left:23.3px;top:56.2px;width:38px;height:3.5px;overflow:hidden;font-size:2.8px;line-height:3.5px;color:#444;font-weight:normal;white-space:nowrap;opacity:0.72">ribes something from a past era that i</div><div class="ab" style="left:23.3px;top:58.5px;width:28px;height:3.5px;overflow:hidden;font-size:2.8px;line-height:3.5px;color:#444;font-weight:normal;white-space:nowrap;opacity:0.72">a past era that is admired fo</div><div class="ab" style="left:23.3px;top:62.75px;width:16px;height:3.25px;overflow:hidden;font-size:2.6px;line-height:3.25px;color:#888;font-weight:normal;white-space:nowrap;opacity:0.72">quality and style to</div><div class="ab" style="left:79.1px;top:60.4px;width:50.9px;height:15.3px;background:#fff;border:0.8px solid #d6d6d6;box-shadow:0 0.7px 1.4px rgba(0,0,0,.13)"></div><div class="ab" style="left:81.39999999999999px;top:62.4px;width:2.8px;height:2.8px;background:#3a9a4a;border-radius:50%"></div><div class="ab" style="left:85.39999999999999px;top:61.9px;width:12px;height:2.5px;overflow:hidden;font-size:2.0px;line-height:2.5px;color:#aaa;font-weight:normal;white-space:nowrap;opacity:0.72">omething from a past</div><div class="ab" style="left:85.39999999999999px;top:65.10000000000001px;width:38px;height:3.5px;overflow:hidden;font-size:2.8px;line-height:3.5px;color:#444;font-weight:normal;white-space:nowrap;opacity:0.72">omething from a past era that is admir</div><div class="ab" style="left:85.39999999999999px;top:67.75px;width:28px;height:3.5px;overflow:hidden;font-size:2.8px;line-height:3.5px;color:#444;font-weight:normal;white-space:nowrap;opacity:0.72">era that is admired for its q</div><div class="ab" style="left:85.39999999999999px;top:71.8px;width:16px;height:3.25px;overflow:hidden;font-size:2.6px;line-height:3.25px;color:#888;font-weight:normal;white-space:nowrap;opacity:0.72"> and style today peo</div><div class="ab" style="left:8px;top:75.6px;width:10px;height:3.0px;overflow:hidden;font-size:2.4px;line-height:3.0px;color:#777;font-weight:normal;white-space:nowrap;opacity:0.72">ribes something</div><div class="ab" style="left:140.3px;top:75.6px;width:2.5px;height:3.0px;overflow:hidden;font-size:2.4px;line-height:3.0px;color:#555;font-weight:normal;white-space:nowrap;opacity:0.72">g from a</div></div>
<div class="th" style="left:276px;top:419.2px"><div class="ab" style="left:7.6px;top:0px;width:23.8px;height:26.8px;background:#f9cd72;"></div><div class="ab" style="left:15.75px;top:9.35px;font-size:49.6px;line-height:49.6px;color:#222;font-weight:bold;white-space:nowrap;transform:scale(0.125,0.13375);transform-origin:0 0;-webkit-text-stroke:2.6px #222;">YOUR</div><div class="ab" style="left:15.75px;top:16.05px;font-size:49.6px;line-height:49.6px;color:#222;font-weight:bold;white-space:nowrap;transform:scale(0.125,0.13375);transform-origin:0 0;-webkit-text-stroke:2.6px #222;">COMMENT</div><div class="ab" style="left:15.75px;top:34.900000000000006px;width:44.5px;height:3.875px;overflow:hidden;font-size:3.1px;line-height:3.875px;color:#333;font-weight:normal;white-space:nowrap;opacity:0.72">d vintage describes something from a pas</div><div class="ab" style="left:15.75px;top:39.0px;width:41.5px;height:3.875px;overflow:hidden;font-size:3.1px;line-height:3.875px;color:#333;font-weight:normal;white-space:nowrap;opacity:0.72">g from a past era that is admired for</div><div class="ab" style="left:15.75px;top:43.2px;width:25px;height:3.875px;overflow:hidden;font-size:3.1px;line-height:3.875px;color:#333;font-weight:normal;white-space:nowrap;opacity:0.72">mired for its quality and</div><div class="ab" style="left:15px;top:49.5px;width:46.4px;height:21.9px;background:#fff;border:0.8px solid #d2d2d2;border-radius:1px"></div><svg class="ab" style="left:68.1px;top:12.0px;overflow:hidden" width="70.3" height="59" viewBox="0 0 70.3 59"><defs><filter id="bf7" x="-10%" y="-10%" width="120%" height="120%"><feGaussianBlur stdDeviation="0.9900000000000001"/></filter></defs><g filter="url(#bf7)"><rect width="70.3" height="59" fill="#9a7450"/><polygon points="0,0 57,0 57,11 0,23" fill="#bfb5a2"/><rect x="60" y="0" width="11" height="13" fill="#4e3a28"/><polygon points="0,4.4 24,3 24,5.5 0,7.6" fill="#4a4038"/><polygon points="20,1.5 39,1.5 39,5 30,6 22,13.5 13,13.5 19,6" fill="#2a241e"/><polygon points="0,23 57,11 58,13.5 3,26" fill="#d6ccb8"/><polygon points="4.6,26.9 56,12.5 60,20 52,38.2 11.9,41.4" fill="#2c2824"/><polygon points="0,23 4.6,26.9 11.9,41.4 16,56 0,53" fill="#d8d0bc"/><polygon points="0,53 16,56 18,59 0,59" fill="#b08850"/><polygon points="11.9,41.4 52,38.2 53,41 13,44.5" fill="#a09a90"/><ellipse cx="23" cy="47" rx="7" ry="10.5" fill="#c08a78"/><ellipse cx="55.5" cy="30" rx="9" ry="10" fill="#b07866"/></g></svg><div class="ab" style="left:8px;top:75.6px;width:10px;height:3.0px;overflow:hidden;font-size:2.4px;line-height:3.0px;color:#777;font-weight:normal;white-space:nowrap;opacity:0.72">ribes something</div><div class="ab" style="left:140.3px;top:75.6px;width:2.5px;height:3.0px;overflow:hidden;font-size:2.4px;line-height:3.0px;color:#555;font-weight:normal;white-space:nowrap;opacity:0.72">g from a</div></div>
<div class="th" style="left:489px;top:419.2px"><div class="ab" style="left:8.2px;top:0px;width:22.9px;height:21.4px;background:#f9cd72;"></div><div class="ab" style="left:16.4px;top:9.68px;font-size:44.8px;line-height:44.8px;color:#1f1f1f;font-weight:bold;white-space:nowrap;transform:scale(0.125,0.13375);transform-origin:0 0;-webkit-text-stroke:2.6px #1f1f1f;">PRACTICE</div><div class="ab" style="left:80.8px;top:12.399999999999999px;width:60.6px;height:4.0px;overflow:hidden;font-size:3.2px;line-height:4.0px;color:#222;font-weight:normal;white-space:nowrap;opacity:0.72">omething from a past era that is admired for its qu</div><div class="ab" style="left:19.9px;top:25.25px;width:11px;height:3.375px;overflow:hidden;font-size:2.7px;line-height:3.375px;color:#333;font-weight:bold;white-space:nowrap;opacity:0.9">the word vintag</div><div class="ab" style="left:19.9px;top:28.7px;width:15px;height:3.375px;overflow:hidden;font-size:2.7px;line-height:3.375px;color:#333;font-weight:bold;white-space:nowrap;opacity:0.9">omething from a pas</div><div class="ab" style="left:53.5px;top:25.25px;width:11px;height:3.375px;overflow:hidden;font-size:2.7px;line-height:3.375px;color:#333;font-weight:bold;white-space:nowrap;opacity:0.9">d vintage descr</div><div class="ab" style="left:53.5px;top:28.7px;width:15px;height:3.375px;overflow:hidden;font-size:2.7px;line-height:3.375px;color:#333;font-weight:bold;white-space:nowrap;opacity:0.9">g from a past era t</div><div class="ab" style="left:87.1px;top:25.25px;width:11px;height:3.375px;overflow:hidden;font-size:2.7px;line-height:3.375px;color:#333;font-weight:bold;white-space:nowrap;opacity:0.9">ge describes so</div><div class="ab" style="left:87.1px;top:28.7px;width:15px;height:3.375px;overflow:hidden;font-size:2.7px;line-height:3.375px;color:#333;font-weight:bold;white-space:nowrap;opacity:0.9">a past era that is </div><div class="ab" style="left:120.7px;top:25.25px;width:11px;height:3.375px;overflow:hidden;font-size:2.7px;line-height:3.375px;color:#333;font-weight:bold;white-space:nowrap;opacity:0.9">ribes something</div><div class="ab" style="left:120.7px;top:28.7px;width:15px;height:3.375px;overflow:hidden;font-size:2.7px;line-height:3.375px;color:#333;font-weight:bold;white-space:nowrap;opacity:0.9">era that is admired</div><div class="ab" style="left:19.9px;top:35.400000000000006px;width:120.6px;height:3.5px;overflow:hidden;font-size:2.8px;line-height:3.5px;color:#555;font-weight:normal;white-space:nowrap;opacity:0.72">the word vintage describes something from a past era that is admired for its quality and style today people </div><div class="ab" style="left:16.4px;top:39.300000000000004px;width:2.8px;height:3.5px;overflow:hidden;font-size:2.8px;line-height:3.5px;color:#777;font-weight:normal;white-space:nowrap;opacity:0.72">d vintag</div><div class="ab" style="left:19.9px;top:39.300000000000004px;width:107.0px;height:3.5px;overflow:hidden;font-size:2.8px;line-height:3.5px;color:#555;font-weight:normal;white-space:nowrap;opacity:0.72">ribes something from a past era that is admired for its quality and style today people often wea</div><div class="ab" style="left:16.4px;top:43.2px;width:2.8px;height:3.5px;overflow:hidden;font-size:2.8px;line-height:3.5px;color:#777;font-weight:normal;white-space:nowrap;opacity:0.72">d vintag</div><div class="ab" style="left:19.9px;top:43.2px;width:113.69999999999999px;height:3.5px;overflow:hidden;font-size:2.8px;line-height:3.5px;color:#555;font-weight:normal;white-space:nowrap;opacity:0.72">a past era that is admired for its quality and style today people often wear old clothes because they </div><div class="ab" style="left:16.4px;top:47.10000000000001px;width:2.8px;height:3.5px;overflow:hidden;font-size:2.8px;line-height:3.5px;color:#777;font-weight:normal;white-space:nowrap;opacity:0.72">d vintag</div><div class="ab" style="left:19.9px;top:47.10000000000001px;width:120.6px;height:3.5px;overflow:hidden;font-size:2.8px;line-height:3.5px;color:#555;font-weight:normal;white-space:nowrap;opacity:0.72">mired for its quality and style today people often wear old clothes because they feel unique and timeless in</div><div class="ab" style="left:16.4px;top:51.00000000000001px;width:2.8px;height:3.5px;overflow:hidden;font-size:2.8px;line-height:3.5px;color:#777;font-weight:normal;white-space:nowrap;opacity:0.72">d vintag</div><div class="ab" style="left:19.9px;top:51.00000000000001px;width:107.80000000000001px;height:3.5px;overflow:hidden;font-size:2.8px;line-height:3.5px;color:#555;font-weight:normal;white-space:nowrap;opacity:0.72"> and style today people often wear old clothes because they feel unique and timeless in modern ci</div><div class="ab" style="left:16.4px;top:54.900000000000006px;width:2.8px;height:3.5px;overflow:hidden;font-size:2.8px;line-height:3.5px;color:#777;font-weight:normal;white-space:nowrap;opacity:0.72">d vintag</div><div class="ab" style="left:19.9px;top:54.900000000000006px;width:115.9px;height:3.5px;overflow:hidden;font-size:2.8px;line-height:3.5px;color:#555;font-weight:normal;white-space:nowrap;opacity:0.72">e describes something from a past era that is admired for its quality and style today people often wear </div><div class="ab" style="left:16.4px;top:58.800000000000004px;width:2.8px;height:3.5px;overflow:hidden;font-size:2.8px;line-height:3.5px;color:#777;font-weight:normal;white-space:nowrap;opacity:0.72">d vintag</div><div class="ab" style="left:19.9px;top:58.800000000000004px;width:121.5px;height:3.5px;overflow:hidden;font-size:2.8px;line-height:3.5px;color:#555;font-weight:normal;white-space:nowrap;opacity:0.72"> from a past era that is admired for its quality and style today people often wear old clothes because they f</div><div class="ab" style="left:16.4px;top:62.7px;width:2.8px;height:3.5px;overflow:hidden;font-size:2.8px;line-height:3.5px;color:#777;font-weight:normal;white-space:nowrap;opacity:0.72">d vintag</div><div class="ab" style="left:19.9px;top:62.7px;width:107.0px;height:3.5px;overflow:hidden;font-size:2.8px;line-height:3.5px;color:#222;font-weight:bold;white-space:nowrap;opacity:0.9"> is admired for its quality and style today people often wear old clothes because they feel uniq</div><div class="ab" style="left:16.4px;top:66.60000000000001px;width:2.8px;height:3.5px;overflow:hidden;font-size:2.8px;line-height:3.5px;color:#777;font-weight:normal;white-space:nowrap;opacity:0.72">d vintag</div><div class="ab" style="left:19.9px;top:66.60000000000001px;width:107.0px;height:3.5px;overflow:hidden;font-size:2.8px;line-height:3.5px;color:#555;font-weight:normal;white-space:nowrap;opacity:0.72">uality and style today people often wear old clothes because they feel unique and timeless in mo</div><div class="ab" style="left:16.4px;top:70.50000000000001px;width:2.8px;height:3.5px;overflow:hidden;font-size:2.8px;line-height:3.5px;color:#777;font-weight:normal;white-space:nowrap;opacity:0.72">d vintag</div><div class="ab" style="left:19.9px;top:70.50000000000001px;width:101.5px;height:3.5px;overflow:hidden;font-size:2.8px;line-height:3.5px;color:#555;font-weight:normal;white-space:nowrap;opacity:0.72">vintage describes something from a past era that is admired for its quality and style today </div><div class="ab" style="left:8px;top:75.6px;width:10px;height:3.0px;overflow:hidden;font-size:2.4px;line-height:3.0px;color:#777;font-weight:normal;white-space:nowrap;opacity:0.72">ribes something</div><div class="ab" style="left:140.3px;top:75.6px;width:2.5px;height:3.0px;overflow:hidden;font-size:2.4px;line-height:3.0px;color:#555;font-weight:normal;white-space:nowrap;opacity:0.72">g from a</div></div>
<div class="th" style="left:702.5px;top:419.2px"><div class="ab" style="left:8.4px;top:0px;width:22.2px;height:21.05px;background:#f9cd72;"></div><div class="ab" style="left:16.25px;top:9.46px;font-size:48.0px;line-height:48.0px;color:#1f1f1f;font-weight:bold;white-space:nowrap;transform:scale(0.125,0.13375);transform-origin:0 0;-webkit-text-stroke:2.6px #1f1f1f;">DISCUSSION</div><div class="ab" style="left:16.6px;top:29.2px;width:2.6px;height:3.625px;overflow:hidden;font-size:2.9px;line-height:3.625px;color:#555;font-weight:normal;white-space:nowrap;opacity:0.72">d vintag</div><div class="ab" style="left:19.4px;top:29.2px;width:61.699999999999996px;height:3.625px;overflow:hidden;font-size:2.9px;line-height:3.625px;color:#555;font-weight:normal;white-space:nowrap;opacity:0.72">the word vintage describes something from a past era tha</div><div class="ab" style="left:19.4px;top:32.300000000000004px;width:56.199999999999996px;height:3.625px;overflow:hidden;font-size:2.9px;line-height:3.625px;color:#555;font-weight:normal;white-space:nowrap;opacity:0.72">d vintage describes something from a past era that i</div><div class="ab" style="left:16.6px;top:38.1px;width:2.6px;height:3.625px;overflow:hidden;font-size:2.9px;line-height:3.625px;color:#555;font-weight:normal;white-space:nowrap;opacity:0.72">d vintag</div><div class="ab" style="left:19.4px;top:38.1px;width:62.50000000000001px;height:3.625px;overflow:hidden;font-size:2.9px;line-height:3.625px;color:#222;font-weight:bold;white-space:nowrap;opacity:0.9">ribes something from a past era that is admired for its q</div><div class="ab" style="left:19.4px;top:41.2px;width:63.300000000000004px;height:3.625px;overflow:hidden;font-size:2.9px;line-height:3.625px;color:#222;font-weight:bold;white-space:nowrap;opacity:0.9">omething from a past era that is admired for its quality </div><div class="ab" style="left:16.6px;top:46.7px;width:2.6px;height:3.625px;overflow:hidden;font-size:2.9px;line-height:3.625px;color:#555;font-weight:normal;white-space:nowrap;opacity:0.72">d vintag</div><div class="ab" style="left:19.4px;top:46.7px;width:61.699999999999996px;height:3.625px;overflow:hidden;font-size:2.9px;line-height:3.625px;color:#555;font-weight:normal;white-space:nowrap;opacity:0.72">a past era that is admired for its quality and style tod</div><div class="ab" style="left:19.4px;top:49.900000000000006px;width:61.699999999999996px;height:3.625px;overflow:hidden;font-size:2.9px;line-height:3.625px;color:#555;font-weight:normal;white-space:nowrap;opacity:0.72">era that is admired for its quality and style today peop</div><div class="ab" style="left:19.4px;top:53.400000000000006px;width:27.35px;height:3.625px;overflow:hidden;font-size:2.9px;line-height:3.625px;color:#555;font-weight:normal;white-space:nowrap;opacity:0.72">t is admired for its quality</div><div class="ab" style="left:16.6px;top:58.800000000000004px;width:2.6px;height:3.625px;overflow:hidden;font-size:2.9px;line-height:3.625px;color:#555;font-weight:normal;white-space:nowrap;opacity:0.72">d vintag</div><div class="ab" style="left:19.4px;top:58.800000000000004px;width:62.50000000000001px;height:3.625px;overflow:hidden;font-size:2.9px;line-height:3.625px;color:#555;font-weight:normal;white-space:nowrap;opacity:0.72">mired for its quality and style today people often wear o</div><div class="ab" style="left:19.4px;top:62.300000000000004px;width:53.9px;height:3.625px;overflow:hidden;font-size:2.9px;line-height:3.625px;color:#555;font-weight:normal;white-space:nowrap;opacity:0.72">or its quality and style today people often wear o</div><div class="ab" style="left:19.4px;top:65.60000000000001px;width:26.6px;height:3.625px;overflow:hidden;font-size:2.9px;line-height:3.625px;color:#555;font-weight:normal;white-space:nowrap;opacity:0.72">quality and style today peo</div><svg class="ab" style="left:97.5px;top:11.2px;overflow:hidden" width="41.4" height="60.9" viewBox="0 0 41.4 60.9"><defs><filter id="bf8" x="-10%" y="-10%" width="120%" height="120%"><feGaussianBlur stdDeviation="0.81"/></filter></defs><g filter="url(#bf8)"><rect width="41.4" height="60.9" fill="#5c5c5c"/><polygon points="11,24 36,23 40,47 37,53 12,53 10,44" fill="#e4e0d8"/><polygon points="1,41 12,37 13,45 2,47" fill="#dcd6cc"/><polygon points="14,23 29.7,22.7 30,52.3 15,52.3" fill="#8fc2b6"/><polygon points="11,25.8 17,25.8 17,52.3 11,52.3" fill="#2a4a3c"/><polygon points="18,19 26,19 24,27 20,27" fill="#e8e2da"/><ellipse cx="23" cy="7" rx="6.5" ry="4.5" fill="#3a2420"/><ellipse cx="22" cy="13" rx="4.5" ry="6.5" fill="#d4b4a4"/><rect x="9.4" y="52.3" width="20.3" height="9" fill="#7a5030"/><ellipse cx="4.5" cy="42" rx="4" ry="3" fill="#d8b0a0"/><ellipse cx="20.5" cy="44.5" rx="4" ry="3" fill="#d8b0a0"/></g></svg><div class="ab" style="left:88.9px;top:11.2px;width:18px;height:32.85px;background:#f9cd72;"></div><div class="ab" style="left:8px;top:75.6px;width:10px;height:3.0px;overflow:hidden;font-size:2.4px;line-height:3.0px;color:#777;font-weight:normal;white-space:nowrap;opacity:0.72">ribes something</div><div class="ab" style="left:140.3px;top:75.6px;width:2.5px;height:3.0px;overflow:hidden;font-size:2.4px;line-height:3.0px;color:#555;font-weight:normal;white-space:nowrap;opacity:0.72">g from a</div></div>
<div class="th" style="left:62.5px;top:566px"><div class="ab" style="left:7.7px;top:0px;width:23.4px;height:25.5px;background:#f9cd72;"></div><div class="ab" style="left:15.9px;top:9.52px;font-size:49.6px;line-height:49.6px;color:#222;font-weight:bold;white-space:nowrap;transform:scale(0.125,0.13375);transform-origin:0 0;-webkit-text-stroke:2.6px #222;">VINTAGE</div><div class="ab" style="left:15.9px;top:15.75px;font-size:49.6px;line-height:49.6px;color:#222;font-weight:bold;white-space:nowrap;transform:scale(0.125,0.13375);transform-origin:0 0;-webkit-text-stroke:2.6px #222;">SCENES</div><div class="ab" style="left:16.25px;top:31.2px;width:2.6px;height:3.625px;overflow:hidden;font-size:2.9px;line-height:3.625px;color:#666;font-weight:normal;white-space:nowrap;opacity:0.72">d vintag</div><div class="ab" style="left:19.1px;top:31.2px;width:27.6px;height:3.625px;overflow:hidden;font-size:2.9px;line-height:3.625px;color:#555;font-weight:normal;white-space:nowrap;opacity:0.72">the word vintage describes s</div><div class="ab" style="left:19.1px;top:34.5px;width:29.199999999999996px;height:3.625px;overflow:hidden;font-size:2.9px;line-height:3.625px;color:#333;font-weight:normal;white-space:nowrap;opacity:0.72">d vintage describes something</div><div class="ab" style="left:16.25px;top:39.2px;width:2.6px;height:3.625px;overflow:hidden;font-size:2.9px;line-height:3.625px;color:#666;font-weight:normal;white-space:nowrap;opacity:0.72">d vintag</div><div class="ab" style="left:19.1px;top:39.2px;width:29.199999999999996px;height:3.625px;overflow:hidden;font-size:2.9px;line-height:3.625px;color:#555;font-weight:normal;white-space:nowrap;opacity:0.72">ribes something from a past e</div><div class="ab" style="left:19.1px;top:42.300000000000004px;width:25.299999999999997px;height:3.625px;overflow:hidden;font-size:2.9px;line-height:3.625px;color:#333;font-weight:normal;white-space:nowrap;opacity:0.72">omething from a past era t</div><div class="ab" style="left:16.25px;top:47.0px;width:2.6px;height:3.625px;overflow:hidden;font-size:2.9px;line-height:3.625px;color:#666;font-weight:normal;white-space:nowrap;opacity:0.72">d vintag</div><div class="ab" style="left:19.1px;top:47.0px;width:29.199999999999996px;height:3.625px;overflow:hidden;font-size:2.9px;line-height:3.625px;color:#555;font-weight:normal;white-space:nowrap;opacity:0.72">a past era that is admired fo</div><div class="ab" style="left:19.1px;top:50.1px;width:33.1px;height:3.625px;overflow:hidden;font-size:2.9px;line-height:3.625px;color:#333;font-weight:normal;white-space:nowrap;opacity:0.72">era that is admired for its quali</div><div class="ab" style="left:19.1px;top:53.6px;width:16.699999999999996px;height:3.625px;overflow:hidden;font-size:2.9px;line-height:3.625px;color:#555;font-weight:normal;white-space:nowrap;opacity:0.72">t is admired for it</div><div class="ab" style="left:16.25px;top:58.300000000000004px;width:2.6px;height:3.625px;overflow:hidden;font-size:2.9px;line-height:3.625px;color:#666;font-weight:normal;white-space:nowrap;opacity:0.72">d vintag</div><div class="ab" style="left:19.1px;top:58.300000000000004px;width:32.3px;height:3.625px;overflow:hidden;font-size:2.9px;line-height:3.625px;color:#555;font-weight:normal;white-space:nowrap;opacity:0.72">mired for its quality and style </div><div class="ab" style="left:19.1px;top:61.400000000000006px;width:20.6px;height:3.625px;overflow:hidden;font-size:2.9px;line-height:3.625px;color:#333;font-weight:normal;white-space:nowrap;opacity:0.72">or its quality and sty</div><div class="ab" style="left:16.25px;top:66.4px;width:2.6px;height:3.625px;overflow:hidden;font-size:2.9px;line-height:3.625px;color:#666;font-weight:normal;white-space:nowrap;opacity:0.72">d vintag</div><div class="ab" style="left:19.1px;top:66.4px;width:18.199999999999996px;height:3.625px;overflow:hidden;font-size:2.9px;line-height:3.625px;color:#555;font-weight:normal;white-space:nowrap;opacity:0.72"> and style today peo</div><div class="ab" style="left:19.1px;top:69.7px;width:30.0px;height:3.625px;overflow:hidden;font-size:2.9px;line-height:3.625px;color:#333;font-weight:normal;white-space:nowrap;opacity:0.72">he word vintage describes some</div><svg class="ab" style="left:58.75px;top:11.1px;overflow:hidden" width="42.65" height="60.9" viewBox="0 0 42.65 60.9"><defs><filter id="bf9" x="-10%" y="-10%" width="120%" height="120%"><feGaussianBlur stdDeviation="0.81"/></filter></defs><g filter="url(#bf9)"><rect width="42.65" height="60.9" fill="#b6cad0"/><rect width="42.65" height="12" fill="#a2c2d4"/><polygon points="0,10.5 14,9 18,20 17,28 0,28" fill="#3e5a3a"/><polygon points="34,22 42.65,19 42.65,29 34,29" fill="#3e5a3a"/><rect x="0" y="18" width="13.75" height="13" fill="#cfd0c0"/><polygon points="0,28 30,27 42.65,29 42.65,45 0,45" fill="#72b0a0"/><rect x="0" y="29" width="12" height="17" fill="#2c5a58"/><rect x="0" y="45" width="42.65" height="16" fill="#6e6e6c"/><ellipse cx="19" cy="22" rx="2.5" ry="3" fill="#7a5a48"/><polygon points="13.75,24 24,24 24,51 14,51" fill="#38384a"/><ellipse cx="28" cy="24" rx="3" ry="3" fill="#6a4a38"/><polygon points="23,27 32.5,27 33,52.7 24,52.7" fill="#aeb4c0"/></g></svg><svg class="ab" style="left:103.4px;top:11.1px;overflow:hidden" width="38.2" height="29.5" viewBox="0 0 38.2 29.5"><defs><filter id="bf10" x="-10%" y="-10%" width="120%" height="120%"><feGaussianBlur stdDeviation="0.81"/></filter></defs><g filter="url(#bf10)"><rect width="38.2" height="29.5" fill="#6a5a4e"/><rect width="38.2" height="5" fill="#b0a898"/><polygon points="0,9 38.2,16 38.2,29.5 0,29.5" fill="#4e4238"/><ellipse cx="28" cy="18" rx="8" ry="5" fill="#a08a78"/><ellipse cx="10" cy="14" rx="6" ry="4" fill="#8a7464"/></g></svg><svg class="ab" style="left:103.4px;top:42.65px;overflow:hidden" width="38.2" height="29.35" viewBox="0 0 38.2 29.35"><defs><filter id="bf11" x="-10%" y="-10%" width="120%" height="120%"><feGaussianBlur stdDeviation="0.81"/></filter></defs><g filter="url(#bf11)"><rect width="38.2" height="29.35" fill="#3e2c22"/><ellipse cx="29" cy="4" rx="7" ry="4.5" fill="#dca450"/><ellipse cx="32" cy="22" rx="6" ry="5" fill="#b85a30"/><rect x="4" y="10" width="6" height="19" fill="#2a1e18"/><rect x="18" y="12" width="8" height="17" fill="#24201c"/></g></svg><div class="ab" style="left:8px;top:75.6px;width:10px;height:3.0px;overflow:hidden;font-size:2.4px;line-height:3.0px;color:#777;font-weight:normal;white-space:nowrap;opacity:0.72">ribes something</div><div class="ab" style="left:140.3px;top:75.6px;width:2.5px;height:3.0px;overflow:hidden;font-size:2.4px;line-height:3.0px;color:#555;font-weight:normal;white-space:nowrap;opacity:0.72">g from a</div></div>
<div class="th" style="left:276px;top:566px"><svg class="ab" style="left:7.9px;top:7.2px;overflow:hidden" width="53.5" height="64.7" viewBox="0 0 53.5 64.7"><defs><filter id="bf12" x="-10%" y="-10%" width="120%" height="120%"><feGaussianBlur stdDeviation="0.9"/></filter></defs><g filter="url(#bf12)"><rect width="53.5" height="64.7" fill="#3a2a24"/><rect width="28" height="20" fill="#a47c48"/><rect x="28" width="25.5" height="20" fill="#c8c6bc"/><rect x="0" y="19.8" width="34.4" height="33.6" fill="#2a7876"/><polygon points="2,21 24,21 27,36 4,40" fill="#56aaa2"/><rect x="34.4" y="19.8" width="19.1" height="34" fill="#36191b"/><ellipse cx="45" cy="31" rx="7" ry="7" fill="#6a2222"/><rect x="42" y="19.8" width="11.5" height="5.5" fill="#4a9090"/><rect x="0" y="53.4" width="53.5" height="11.3" fill="#5a4030"/><polygon points="34,64.7 53.5,58 53.5,64.7" fill="#9a9080"/><rect x="27" y="28" width="3" height="36" fill="#6a5a30"/></g></svg><div class="ab" style="left:72.3px;top:0px;width:22.8px;height:21.6px;background:#f9cd72;"></div><div class="ab" style="left:78.25px;top:10.24px;font-size:50.4px;line-height:50.4px;color:#1f1f1f;font-weight:bold;white-space:nowrap;transform:scale(0.125,0.13375);transform-origin:0 0;-webkit-text-stroke:2.6px #1f1f1f;">HOMEWORK</div><div class="ab" style="left:72.8px;top:27.0px;width:21px;height:4.25px;overflow:hidden;font-size:3.4px;line-height:4.25px;color:#333;font-weight:normal;white-space:nowrap;opacity:0.72">ge describes somethi</div><div class="ab" style="left:72.8px;top:32.0px;width:66.4px;height:3.75px;overflow:hidden;font-size:3.0px;line-height:3.75px;color:#555;font-weight:normal;white-space:nowrap;opacity:0.72">omething from a past era that is admired for its quality a</div><div class="ab" style="left:72.8px;top:35.9px;width:66.4px;height:3.75px;overflow:hidden;font-size:3.0px;line-height:3.75px;color:#555;font-weight:normal;white-space:nowrap;opacity:0.72">g from a past era that is admired for its quality and styl</div><div class="ab" style="left:72.8px;top:39.8px;width:66px;height:3.75px;overflow:hidden;font-size:3.0px;line-height:3.75px;color:#555;font-weight:normal;white-space:nowrap;opacity:0.72">a past era that is admired for its quality and style today</div><div class="ab" style="left:72.8px;top:47.0px;width:2.5px;height:3.75px;overflow:hidden;font-size:3.0px;line-height:3.75px;color:#666;font-weight:normal;white-space:nowrap;opacity:0.72">d vinta</div><div class="ab" style="left:75.9px;top:47.0px;width:46.89999999999999px;height:3.75px;overflow:hidden;font-size:3.0px;line-height:3.75px;color:#444;font-weight:normal;white-space:nowrap;opacity:0.72">the word vintage describes something from a</div><div class="ab" style="left:72.8px;top:50.800000000000004px;width:2.5px;height:3.75px;overflow:hidden;font-size:3.0px;line-height:3.75px;color:#666;font-weight:normal;white-space:nowrap;opacity:0.72">d vinta</div><div class="ab" style="left:75.9px;top:50.800000000000004px;width:29.69999999999999px;height:3.75px;overflow:hidden;font-size:3.0px;line-height:3.75px;color:#444;font-weight:normal;white-space:nowrap;opacity:0.72">omething from a past era that</div><div class="ab" style="left:72.8px;top:54.400000000000006px;width:2.5px;height:3.75px;overflow:hidden;font-size:3.0px;line-height:3.75px;color:#666;font-weight:normal;white-space:nowrap;opacity:0.72">d vinta</div><div class="ab" style="left:75.9px;top:54.400000000000006px;width:50.0px;height:3.75px;overflow:hidden;font-size:3.0px;line-height:3.75px;color:#444;font-weight:normal;white-space:nowrap;opacity:0.72">t is admired for its quality and style today </div><div class="ab" style="left:72.8px;top:57.95px;width:2.5px;height:3.75px;overflow:hidden;font-size:3.0px;line-height:3.75px;color:#666;font-weight:normal;white-space:nowrap;opacity:0.72">d vinta</div><div class="ab" style="left:75.9px;top:57.95px;width:62.5px;height:3.75px;overflow:hidden;font-size:3.0px;line-height:3.75px;color:#444;font-weight:normal;white-space:nowrap;opacity:0.72"> and style today people often wear old clothes because </div><div class="ab" style="left:8px;top:75.6px;width:10px;height:3.0px;overflow:hidden;font-size:2.4px;line-height:3.0px;color:#777;font-weight:normal;white-space:nowrap;opacity:0.72">ribes something</div><div class="ab" style="left:140.3px;top:75.6px;width:2.5px;height:3.0px;overflow:hidden;font-size:2.4px;line-height:3.0px;color:#555;font-weight:normal;white-space:nowrap;opacity:0.72">g from a</div></div>
<div class="th" style="left:489px;top:566px"><div class="ab" style="left:8px;top:7.3px;width:50.8px;height:50.1px;background:#f9cd72;"></div><div class="ab" style="left:44.2px;top:24.78px;font-size:80.8px;line-height:80.8px;color:#222;font-weight:bold;white-space:nowrap;transform:scale(0.125,0.13375);transform-origin:0 0;-webkit-text-stroke:2.6px #222;letter-spacing:-0.4px">ANY QUESTIONS?</div><div class="ab" style="left:8px;top:75.6px;width:10px;height:3.0px;overflow:hidden;font-size:2.4px;line-height:3.0px;color:#777;font-weight:normal;white-space:nowrap;opacity:0.72">ribes something</div></div>
<div class="pn" style="left:62.5px;top:228.8px">1</div>
<div class="pn" style="left:276px;top:228.8px">2</div>
<div class="pn" style="left:489px;top:228.8px">3</div>
<div class="pn" style="left:702.5px;top:228.8px">4</div>
<div class="pn" style="left:62.5px;top:375.6px">5</div>
<div class="pn" style="left:276px;top:375.6px">6</div>
<div class="pn" style="left:489px;top:375.6px">7</div>
<div class="pn" style="left:702.5px;top:375.6px">8</div>
<div class="pn" style="left:62.5px;top:522.4px">9</div>
<div class="pn" style="left:276px;top:522.4px">10</div>
<div class="pn" style="left:489px;top:522.4px">11</div>
<div class="pn" style="left:702.5px;top:522.4px">12</div>
<div class="pn" style="left:62.5px;top:669.2px">13</div>
<div class="pn" style="left:276px;top:669.2px">14</div>
<div class="pn" style="left:489px;top:669.2px">15</div>
<svg class="ab" style="left:632.5px;top:255.2px" width="12" height="16" viewBox="0 0 12 16"><path d="M1.2 1 L1.2 12.2 L4 9.6 L5.9 14.2 L8 13.3 L6.1 9 L9.6 9 Z" fill="#000" stroke="#fff" stroke-width="1" stroke-linejoin="round"/></svg>
 <div id="scroll"></div>
 <div id="edge"></div>
</div>
</body></html>
